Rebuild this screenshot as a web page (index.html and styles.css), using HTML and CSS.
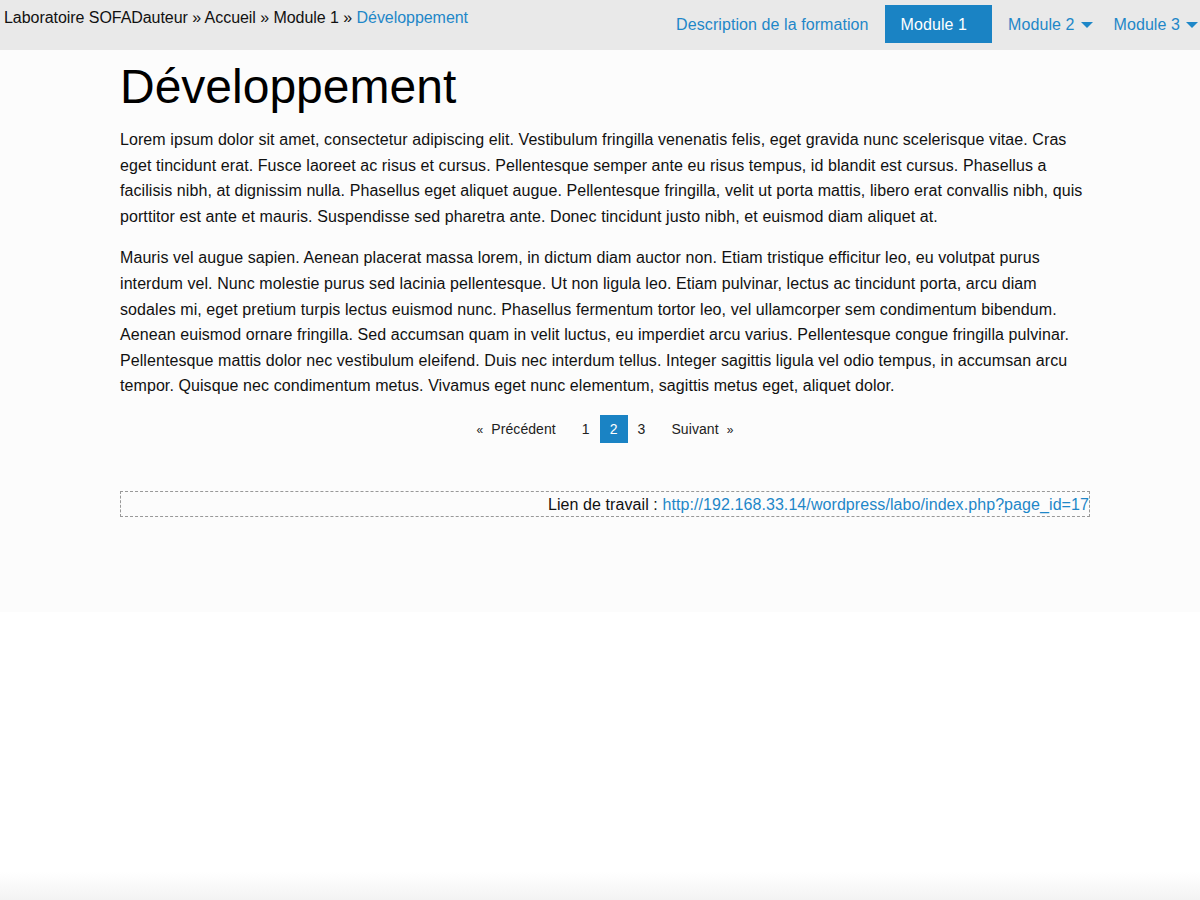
FILE: index.html
```html
<!DOCTYPE html>
<html lang="fr">
<head>
<meta charset="utf-8">
<title>Développement</title>
<link rel="stylesheet" href="styles.css">
</head>
<body>
<header class="topbar">
  <div class="breadcrumb">
    <span>Laboratoire SOFADauteur</span> » <span>Accueil</span> » <span>Module 1</span> » <a href="#" class="crumb-current">Développement</a>
  </div>
  <nav class="menu">
    <a href="#" class="menu-item">Description de la formation</a>
    <a href="#" class="menu-item active">Module 1</a>
    <a href="#" class="menu-item dropdown">Module 2<span class="caret"></span></a>
    <a href="#" class="menu-item dropdown">Module 3<span class="caret"></span></a>
  </nav>
</header>
<main class="main">
  <h1 class="title">Développement</h1>
  <p class="text">Lorem ipsum dolor sit amet, consectetur adipiscing elit. Vestibulum fringilla venenatis felis, eget gravida nunc scelerisque vitae. Cras eget tincidunt erat. Fusce laoreet ac risus et cursus. Pellentesque semper ante eu risus tempus, id blandit est cursus. Phasellus a facilisis nibh, at dignissim nulla. Phasellus eget aliquet augue. Pellentesque fringilla, velit ut porta mattis, libero erat convallis nibh, quis porttitor est ante et mauris. Suspendisse sed pharetra ante. Donec tincidunt justo nibh, et euismod diam aliquet at.</p>
  <p class="text">Mauris vel augue sapien. Aenean placerat massa lorem, in dictum diam auctor non. Etiam tristique efficitur leo, eu volutpat purus interdum vel. Nunc molestie purus sed lacinia pellentesque. Ut non ligula leo. Etiam pulvinar, lectus ac tincidunt porta, arcu diam sodales mi, eget pretium turpis lectus euismod nunc. Phasellus fermentum tortor leo, vel ullamcorper sem condimentum bibendum. Aenean euismod ornare fringilla. Sed accumsan quam in velit luctus, eu imperdiet arcu varius. Pellentesque congue fringilla pulvinar. Pellentesque mattis dolor nec vestibulum eleifend. Duis nec interdum tellus. Integer sagittis ligula vel odio tempus, in accumsan arcu tempor. Quisque nec condimentum metus. Vivamus eget nunc elementum, sagittis metus eget, aliquet dolor.</p>
  <div class="pagination">
    <a href="#" class="page-link prevnext"><span class="guil">«</span>Précédent</a>
    <a href="#" class="page-link">1</a>
    <span class="page-link current">2</span>
    <a href="#" class="page-link">3</a>
    <a href="#" class="page-link prevnext">Suivant<span class="guil right">»</span></a>
  </div>
  <div class="worklink">Lien de travail : <a href="#">http://192.168.33.14/wordpress/labo/index.php?page_id=17</a></div>
</main>
</body>
</html>
```
FILE: styles.css
```css
html, body {
  margin: 0;
  padding: 0;
}
body {
  min-height: 100vh;
  font-family: "Liberation Sans", Arial, Helvetica, sans-serif;
  letter-spacing: 0.08px;
  color: #111;
  background: linear-gradient(to bottom, #ffffff calc(100% - 28px), #f3f3f3 100%);
}
a {
  color: #1e87c8;
  text-decoration: none;
}
.topbar {
  display: flex;
  justify-content: space-between;
  align-items: flex-start;
  height: 50px;
  background: #e9e9e9;
  overflow: hidden;
}
.breadcrumb {
  padding: 6px 0 0 4px;
  font-size: 16px;
  line-height: 24px;
  letter-spacing: -0.05px;
  color: #111;
  white-space: nowrap;
}
.menu {
  display: flex;
  flex-shrink: 0;
  margin-top: 5px;
  margin-right: -3px;
}
.menu-item {
  display: flex;
  align-items: center;
  box-sizing: border-box;
  height: 38px;
  padding: 1px 16px 0;
  font-size: 16px;
  color: #1e87c8;
  white-space: nowrap;
}
.menu-item.active {
  padding-right: 25px;
  background: #1a83c4;
  color: #fff;
}
.menu-item.dropdown {
  padding-right: 5px;
}
.caret {
  display: inline-block;
  width: 0;
  height: 0;
  margin-left: 6px;
  border-left: 6px solid transparent;
  border-right: 6px solid transparent;
  border-top: 6px solid #1e87c8;
}
.main {
  min-height: 562px;
  box-sizing: border-box;
  padding: 8px 110px 0 120px;
  background: #fcfcfc;
}
.title {
  margin: 0 0 11px;
  font-size: 48px;
  line-height: 58px;
  font-weight: 400;
  letter-spacing: 0;
  color: #000;
}
.text {
  margin: 0 0 16px;
  font-size: 16px;
  line-height: 25.6px;
  color: #111;
}
.pagination {
  display: flex;
  justify-content: center;
  margin: 0 0 48px;
  font-size: 14px;
}
.page-link {
  display: block;
  height: 28px;
  line-height: 28px;
  padding: 0 10px;
  color: #222;
}
.page-link.prevnext {
  padding: 0 16px;
}
.page-link.current {
  background: #1a83c4;
  color: #fff;
}
.guil {
  font-size: 12px;
  margin-right: 8px;
}
.guil.right {
  margin: 0 0 0 8px;
}
.worklink {
  box-sizing: border-box;
  height: 26px;
  padding-top: 2px;
  border: 1px dashed #999;
  font-size: 16px;
  line-height: 22px;
  text-align: right;
  color: #111;
  white-space: nowrap;
  overflow: hidden;
}
```
